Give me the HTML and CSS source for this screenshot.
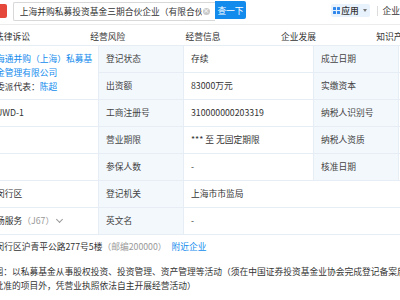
FILE: index.html
```html
<!DOCTYPE html>
<html lang="zh-CN">
<head>
<meta charset="utf-8">
<link rel="stylesheet" href="styles.css">
</head>
<body>
<header class="topbar">
  <div class="logo"></div>
  <div class="search">
    <span class="query">上海并购私募投资基金三期合伙企业（有限合伙）</span>
    <span class="clear">×</span>
  </div>
  <button class="btn">查一下</button>
  <div class="apps">
    <svg class="apps-icon" width="7" height="7" viewBox="0 0 7 7"><rect x="0" y="0" width="3" height="3" rx="0.5"/><rect x="4" y="0" width="3" height="3" rx="0.5"/><rect x="0" y="4" width="3" height="3" rx="0.5"/><rect x="4" y="4" width="3" height="3" rx="0.5"/></svg>
    <span class="apps-text">应用</span>
    <span class="caret"></span>
  </div>
  <span class="sep"></span>
  <span class="ent">企业</span>
</header>
<nav class="tabs">
  <span class="tab">法律诉讼</span>
  <span class="tab">经营风险</span>
  <span class="tab">经营信息</span>
  <span class="tab">企业发展</span>
  <span class="tab">知识产权</span>
</nav>
<table class="info">
  <colgroup>
    <col class="c0"><col class="c1"><col class="c2"><col class="c3"><col class="c4">
  </colgroup>
  <tr>
    <td rowspan="2" class="v0"><a class="link">海通并购（上海）私募基金管理有限公司</a><div>委派代表：<a class="link">陈超</a></div></td>
    <td class="lb">登记状态</td><td class="val">存续</td><td class="lb">成立日期</td><td class="val"></td>
  </tr>
  <tr>
    <td class="lb">出资额</td><td class="val">83000万元</td><td class="lb">实缴资本</td><td class="val"></td>
  </tr>
  <tr>
    <td class="v0">UWD-1</td>
    <td class="lb">工商注册号</td><td class="val">310000000203319</td><td class="lb">纳税人识别号</td><td class="val"></td>
  </tr>
  <tr>
    <td class="v0"></td>
    <td class="lb">营业期限</td><td class="val">*** 至 无固定期限</td><td class="lb">纳税人资质</td><td class="val"></td>
  </tr>
  <tr>
    <td class="v0"></td>
    <td class="lb">参保人数</td><td class="val">-</td><td class="lb">核准日期</td><td class="val"></td>
  </tr>
  <tr>
    <td class="v0">闵行区</td>
    <td class="lb">登记机关</td><td class="val" colspan="3">上海市市监局</td>
  </tr>
  <tr>
    <td class="v0">场服务<span class="muted">（J67）</span><span class="chev"></span></td>
    <td class="lb">英文名</td><td class="val" colspan="3">-</td>
  </tr>
  <tr class="plain">
    <td class="v0 wide" colspan="5">闵行区沪青平公路277号5楼<span class="muted">（邮编200000）</span> <a class="link near">附近企业</a></td>
  </tr>
  <tr class="plain">
    <td class="v0 wide scope" colspan="5">
      <div class="line">围：以私募基金从事股权投资、投资管理、资产管理等活动（须在中国证券投资基金业协会完成登记备案后方可从事经营活动）</div>
      <div class="line">批准的项目外，凭营业执照依法自主开展经营活动）</div>
    </td>
  </tr>
</table>
</body>
</html>
```

FILE: styles.css
```css
html, body {
  margin: 0;
  padding: 0;
}
body {
  width: 400px;
  height: 300px;
  overflow: hidden;
  background: #fff;
  color: #333;
  font-family: "Noto Sans CJK SC", "Noto Sans", sans-serif;
  font-size: 8.75px;
}
.topbar {
  display: flex;
  align-items: flex-start;
  height: 24px;
  border-bottom: 1px solid #ececec;
  white-space: nowrap;
}
.logo {
  width: 9px;
  height: 14px;
  margin-top: 4px;
  background: #e5473b;
  border-radius: 0 2px 2px 0;
}
.search {
  box-sizing: border-box;
  display: flex;
  align-items: center;
  width: 202px;
  height: 19px;
  margin-top: 2px;
  margin-left: 6px;
  padding-left: 6px;
  padding-right: 5px;
  border: 1px solid #d8d8d8;
  border-right: none;
  border-radius: 2px 0 0 2px;
}
.query {
  flex: 1;
  overflow: hidden;
  white-space: nowrap;
  line-height: 12px;
  color: #333;
}
.clear {
  width: 7px;
  height: 7px;
  margin-left: 1px;
  border-radius: 50%;
  background: #c9c9c9;
  color: #fff;
  font-size: 7px;
  line-height: 7px;
  text-align: center;
  font-family: "DejaVu Sans", sans-serif;
}
.btn {
  width: 42px;
  height: 18px;
  margin-top: 1px;
  padding: 0;
  border: none;
  border-radius: 0 2px 2px 0;
  background: #128bed;
  color: #fff;
  font-family: inherit;
  font-size: 8.75px;
}
.apps {
  display: flex;
  align-items: center;
  height: 13px;
  margin-top: 4px;
  margin-left: 85px;
  padding: 0 3px 0 2px;
  background: #e8f2fd;
  border-radius: 2px;
}
.apps-icon {
  fill: #2f86eb;
}
.apps-text {
  margin-left: 1px;
  color: #333;
  font-weight: 500;
  line-height: 12px;
}
.caret {
  width: 0;
  height: 0;
  margin-left: 4px;
  border-left: 2.5px solid transparent;
  border-right: 2.5px solid transparent;
  border-top: 3px solid #777;
}
.sep {
  width: 1px;
  height: 10px;
  margin-top: 6px;
  margin-left: 7px;
  background: #dcdcdc;
}
.ent {
  margin-left: 5px;
  margin-top: 5px;
  line-height: 12px;
}
.tabs {
  box-sizing: border-box;
  display: flex;
  height: 20px;
  padding-top: 6px;
  margin-left: -5px;
  line-height: 12px;
  white-space: nowrap;
}
.tab {
  flex: 0 0 95.3px;
  color: #333;
}
.info {
  table-layout: fixed;
  width: 508px;
  margin-left: -10px;
  border-collapse: collapse;
}
.c0 { width: 108px; }
.c1 { width: 85px; }
.c2 { width: 130px; }
.c3 { width: 85px; }
.c4 { width: 100px; }
.info td {
  height: 26px;
  padding: 0 3px 0 7px;
  border: 1px solid #e6edf4;
  line-height: 14px;
  vertical-align: middle;
  white-space: nowrap;
  overflow: hidden;
}
.info td.v0 {
  padding-left: 5px;
  white-space: normal;
}
.info td.lb {
  background: #f3f8fd;
  color: #444;
}
.link {
  color: #128bed;
  text-decoration: none;
}
.muted {
  color: #999;
}
.chev {
  display: inline-block;
  width: 4px;
  height: 4px;
  margin-left: 3px;
  border-right: 1px solid #999;
  border-bottom: 1px solid #999;
  transform: translateY(-2px) rotate(45deg);
}
.near {
  margin-left: 3px;
}
.info tr.plain td {
  border: none;
  white-space: nowrap;
}
.info tr.plain td.wide {
  height: 24px;
}
.info tr.plain td.scope {
  padding-top: 6px;
  vertical-align: top;
  height: 40px;
}
.line {
  white-space: nowrap;
  margin-left: -1px;
}
```
